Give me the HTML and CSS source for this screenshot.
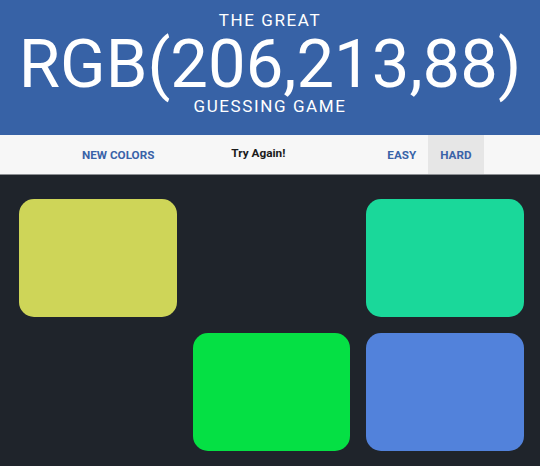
FILE: index.html
```html
<!DOCTYPE html>
<html>
<head>
<meta charset="utf-8">
<link rel="stylesheet" href="styles.css">
</head>
<body>
<h1 class="header">
  <span class="header-small">THE GREAT</span>
  <span class="header-big">RGB(206,213,88)</span>
  <span class="header-small header-bottom">GUESSING GAME</span>
</h1>
<div class="stripe">
  <button class="btn btn-new">New Colors</button>
  <span class="message">Try Again!</span>
  <button class="btn btn-easy">Easy</button>
  <button class="btn btn-hard selected">Hard</button>
</div>
<div class="board">
  <div class="square sq-yellow"></div>
  <div class="square sq-hidden"></div>
  <div class="square sq-teal"></div>
  <div class="square sq-hidden"></div>
  <div class="square sq-green"></div>
  <div class="square sq-blue"></div>
</div>
</body>
</html>
```
FILE: styles.css
```css
html, body {
  margin: 0;
  padding: 0;
  background: #1f242b;
  font-family: Roboto, "Liberation Sans", sans-serif;
}

.header {
  margin: 0;
  padding: 10px 0 22px;
  background: #3762a6;
  color: #fff;
  text-align: center;
  font-weight: 400;
}

.header-small {
  display: block;
  font-size: 17px;
  line-height: 20px;
  letter-spacing: 1.6px;
}

.header-big {
  display: block;
  font-size: 67px;
  line-height: 69px;
}

.header-bottom {
  line-height: 14px;
}

.stripe {
  display: flex;
  align-items: stretch;
  height: 39px;
  background: #f7f7f7;
  border-bottom: 1px solid #8c8f93;
  padding-left: 70px;
}

.btn {
  border: none;
  background: none;
  padding: 0 12px;
  margin: 0;
  font-family: inherit;
  font-size: 11.7px;
  font-weight: 700;
  text-transform: uppercase;
  color: #3a63a8;
}

.btn.selected {
  background: #e6e6e6;
}

.message {
  width: 108px;
  margin-left: 38px;
  text-align: center;
  font-size: 11.8px;
  font-weight: 700;
  color: #1b1b1b;
  line-height: 37px;
}

.btn-easy {
  margin-left: 63px;
}

.board {
  display: grid;
  grid-template-columns: repeat(3, 157.5px);
  grid-auto-rows: 118px;
  gap: 16px;
  padding: 24px 0 0 19px;
}

.square {
  border-radius: 15px;
}

.sq-yellow { background: #ced558; }
.sq-teal { background: #1ad89a; }
.sq-green { background: #05e044; }
.sq-blue { background: #5282db; }
.sq-hidden { background: transparent; }
```
